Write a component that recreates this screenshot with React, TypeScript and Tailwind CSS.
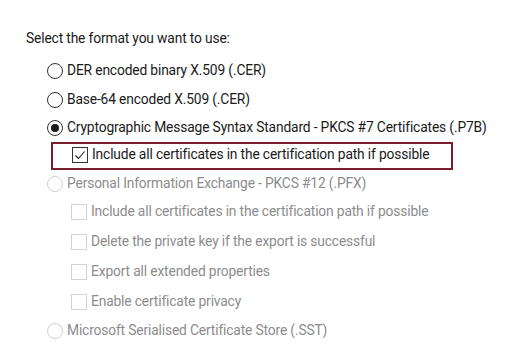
import React from 'react';

const font = { fontFamily: 'Roboto, "Liberation Sans", Arial, sans-serif' };

const Radio: React.FC<{ checked?: boolean; disabled?: boolean }> = ({ checked, disabled }) => (
  <span
    className={`flex h-[16px] w-[16px] shrink-0 items-center justify-center rounded-full border ${
      disabled ? 'border-[#cfcfcf]' : 'border-[#333333]'
    } bg-white`}
  >
    {checked && <span className="h-[8px] w-[8px] rounded-full bg-[#1a1a1a]" />}
  </span>
);

const Checkbox: React.FC<{ checked?: boolean; disabled?: boolean }> = ({ checked, disabled }) => (
  <span
    className={`flex h-[16px] w-[16px] shrink-0 items-center justify-center border ${
      disabled ? 'border-[#d2d2d2]' : 'border-[#333333]'
    } bg-white`}
  >
    {checked && (
      <svg width="12" height="12" viewBox="0 0 12 12" fill="none">
        <path d="M1.5 6.5 L4.5 9.5 L10.5 2.5" stroke="#222" strokeWidth="1.1" />
      </svg>
    )}
  </span>
);

const RadioRow: React.FC<{ label: string; checked?: boolean; disabled?: boolean; h: string }> = ({
  label,
  checked,
  disabled,
  h,
}) => (
  <div className={`flex ${h} items-center gap-[4px] pl-[47px]`}>
    <Radio checked={checked} disabled={disabled} />
    <span className={disabled ? 'text-[#8c8c8c]' : 'text-[#1a1a1a]'}>{label}</span>
  </div>
);

const CheckRow: React.FC<{ label: string; disabled?: boolean }> = ({ label, disabled }) => (
  <div className="flex h-[30px] items-center gap-[4px] pl-[71px]">
    <Checkbox disabled={disabled} />
    <span className={disabled ? 'text-[#8c8c8c]' : 'text-[#1a1a1a]'}>{label}</span>
  </div>
);

export default function App() {
  return (
    <div
      className="h-[355px] w-[509px] overflow-hidden whitespace-nowrap bg-white text-[13.8px] leading-none tracking-[-0.15px]"
      style={font}
    >
      <div className="mt-[29px] flex h-[20px] items-center pl-[26px] text-[#1a1a1a]">
        Select the format you want to use:
      </div>
      <div className="mt-[7px]">
        <RadioRow h="h-[29px]" label="DER encoded binary X.509 (.CER)" />
        <RadioRow h="h-[29px]" label="Base-64 encoded X.509 (.CER)" />
        <RadioRow h="h-[28px]" checked label="Cryptographic Message Syntax Standard - PKCS #7 Certificates (.P7B)" />
        <div className="ml-[51px] flex h-[28px] w-[402px] items-center gap-[4px] border-2 border-[#7b1d2d] pb-[2px] pl-[19px]">
          <Checkbox checked />
          <span className="text-[#1a1a1a]">Include all certificates in the certification path if possible</span>
        </div>
        <RadioRow h="h-[27px]" disabled label="Personal Information Exchange - PKCS #12 (.PFX)" />
        <CheckRow disabled label="Include all certificates in the certification path if possible" />
        <CheckRow disabled label="Delete the private key if the export is successful" />
        <CheckRow disabled label="Export all extended properties" />
        <CheckRow disabled label="Enable certificate privacy" />
        <RadioRow h="h-[27px]" disabled label="Microsoft Serialised Certificate Store (.SST)" />
      </div>
    </div>
  );
}
